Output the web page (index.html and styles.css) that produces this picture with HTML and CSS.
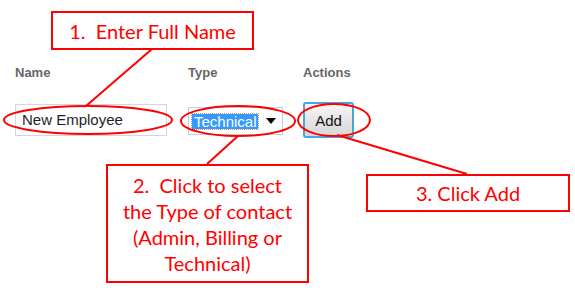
FILE: index.html
```html
<!DOCTYPE html>
<html lang="en">
<head>
  <meta charset="UTF-8">
  <title>Add Contact - Help</title>
  <link rel="stylesheet" href="styles.css">
</head>
<body>
  <div class="page">
    <div class="contacts">
      <div class="grid heads">
        <div>Name</div>
        <div>Type</div>
        <div>Actions</div>
      </div>
      <div class="grid row">
        <div><div class="field">New Employee</div></div>
        <div>
          <div class="select">
            <span class="picked">Technical</span>
            <svg class="caret" width="10" height="6" viewBox="0 0 10 6"><path d="M0 0H10L5 6Z" fill="#000"/></svg>
          </div>
        </div>
        <div><button class="add">Add</button></div>
      </div>
    </div>

    <!-- callout marks drawn over the form -->
    <svg class="marks" width="575" height="292" viewBox="0 0 575 292">
      <g fill="none" stroke="#ff0000" stroke-width="2">
        <line x1="152" y1="49" x2="86" y2="106"/>
        <line x1="238" y1="136" x2="207" y2="164"/>
        <line x1="337" y1="135" x2="467" y2="174"/>
        <ellipse cx="88" cy="120" rx="84" ry="14"/>
        <ellipse cx="238" cy="121" rx="57" ry="15"/>
        <ellipse cx="334" cy="120" rx="36" ry="16"/>
      </g>
    </svg>

    <div class="callout step1">1.&nbsp; Enter Full Name</div>
    <div class="callout step2">2.&nbsp; Click to select<br>the Type of contact<br>(Admin, Billing or<br>Technical)</div>
    <div class="callout step3">3. Click Add</div>
  </div>
</body>
</html>
```

FILE: styles.css
```css
body {
  margin: 0;
  background-color: #fff;
  font-family: "Liberation Sans", Arial, sans-serif;
}

.page {
  position: relative;
  width: 575px;
  height: 292px;
  overflow: hidden;
}

.contacts {
  padding: 65px 0 0 15px;
}

.grid {
  display: grid;
  grid-template-columns: 173px 115px auto;
}

.heads {
  font-size: 13px;
  font-weight: bold;
  line-height: 15px;
  color: #666;
}

.row {
  margin-top: 22px;
  align-items: center;
  height: 36px;
}

.field {
  width: 152px;
  height: 32px;
  box-sizing: border-box;
  border: 1px solid #d3d6da;
  padding-left: 6px;
  font-size: 15px;
  line-height: 30px;
  color: #1e1e2a;
}

.select {
  width: 95px;
  height: 28px;
  box-sizing: border-box;
  border: 1px solid #b9d3e6;
  margin-top: 2px;
  display: flex;
  align-items: center;
  padding-left: 3px;
}

.picked {
  background-color: #3399ff;
  color: #fff;
  font-size: 15px;
  line-height: 15px;
  padding: 0 1px 0 2px;
  outline: 1px dotted #c89a6a;
}

.caret {
  margin-left: 8px;
}

.add {
  width: 51px;
  height: 36px;
  box-sizing: border-box;
  border: 2px solid #49a6dc;
  border-radius: 3px;
  background: linear-gradient(#f7f7f7, #e4e4e4 55%, #d8d8d8);
  font-family: "Liberation Sans", Arial, sans-serif;
  font-size: 15px;
  color: #111;
  padding: 0;
}

.marks {
  position: absolute;
  top: 0;
  left: 0;
  pointer-events: none;
}

.callout {
  position: absolute;
  box-sizing: border-box;
  border: 2px solid #ff0000;
  background-color: #fff;
  color: #ff0000;
  font-family: Lato, "Open Sans", sans-serif;
  font-size: 20px;
  display: flex;
  align-items: center;
  justify-content: center;
  text-align: center;
}

.step1 {
  left: 51px;
  top: 11px;
  width: 203px;
  height: 39px;
}

.step2 {
  left: 106px;
  top: 164px;
  width: 203px;
  height: 119px;
  line-height: 26px;
}

.step3 {
  left: 366px;
  top: 174px;
  width: 204px;
  height: 38px;
}
```
